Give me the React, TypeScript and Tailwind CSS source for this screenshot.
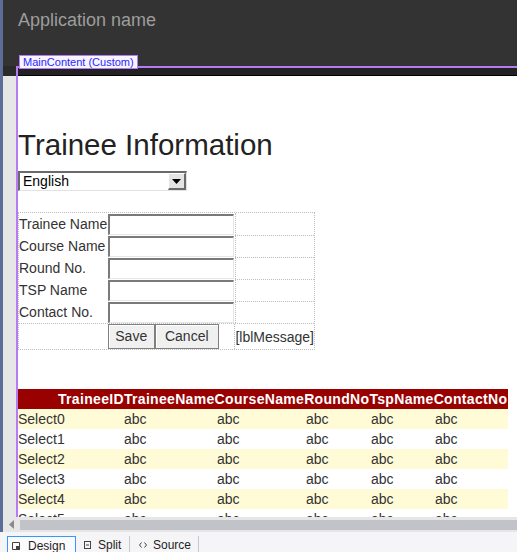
import React from "react";

const rows = [0, 1, 2, 3, 4, 5];
const fields = ["Trainee Name", "Course Name", "Round No.", "TSP Name", "Contact No."];

export default function App() {
  return (
    <div className="w-[517px] h-[552px] flex flex-col overflow-hidden bg-[#eeeef2] font-['Liberation_Sans',Arial,sans-serif]">
      <div className="flex h-[532px]">
        <div className="w-[3px] bg-[#5d6b99]" />
        <div className="flex-1 flex flex-col relative min-w-0">
          <div className="h-[66px] shrink-0 bg-[#333333] pl-[15px] pt-[10px] text-[18px] leading-[20px] text-[#9d9d9d]">
            Application name
          </div>
          <div className="absolute left-[16px] top-[55px] h-[14px] px-[3px] border border-[#b57bf5] bg-[#f7f3ff] text-[11px] leading-[12px] text-[#2a2aff] z-10">
            MainContent (Custom)
          </div>
          <div className="flex flex-1 min-h-0">
            <div className="w-[13px] flex flex-col">
              <div className="h-[10px] bg-[#2a2a2a]" />
              <div className="flex-1 bg-[#e6e6e6]" />
            </div>
            <div className="flex-1 flex flex-col border-l-2 border-t-2 border-[#b57bf5] min-w-0">
              <div className="h-[8px] shrink-0 bg-[#222222] border-b border-black" />
              <div className="flex-1 bg-white overflow-hidden pt-[52px] text-[#333333]">
                <div className="text-[29.5px] leading-[34px] text-[#222222]">Trainee Information</div>
                <div className="mt-[9px] w-[169px] h-[20px] flex border-t-2 border-l-2 border-[#6a6a6a] border-b border-r border-b-[#e2e2e2] border-r-[#e2e2e2]">
                  <div className="flex-1 pl-[3px] text-[14px] leading-[17px] text-black">English</div>
                  <div className="w-[18px] h-[17px] bg-[#e4e4e4] border-t border-l border-t-white border-l-white border-b-2 border-r-2 border-b-[#6a6a6a] border-r-[#6a6a6a] flex items-center justify-center">
                    <svg width="9" height="5" viewBox="0 0 9 5"><path d="M0 0h9L4.5 5z" fill="#000" /></svg>
                  </div>
                </div>
                <div className="mt-[21px] w-[297px] border border-dotted border-[#bdbdbd]">
                  {fields.map((f, i) => (
                    <div key={f} className="flex h-[22px]">
                      <div className="w-[89px] text-[14px] leading-[22px] whitespace-nowrap">{f}</div>
                      <div className="w-[127px] flex items-center">
                        <div className="w-[126px] h-[21px] bg-white border-t-2 border-l-2 border-[#7a7a7a] border-b border-r border-b-[#e6e6e6] border-r-[#e6e6e6]" />
                      </div>
                      <div className={"flex-1 border-l border-dotted border-[#bdbdbd] " + (i > 0 ? "border-t" : "")} />
                    </div>
                  ))}
                  <div className="flex h-[26px] border-t border-dotted border-[#bdbdbd]">
                    <div className="w-[89px]" />
                    <div className="w-[127px] flex items-start">
                      <button className="w-[47px] h-[25px] bg-[#f0f0f0] border border-[#7f7f7f] shadow-[inset_1px_1px_0_#ffffff] text-[14px] text-[#333333]">Save</button>
                      <button className="w-[64px] h-[25px] bg-[#f0f0f0] border border-[#7f7f7f] shadow-[inset_1px_1px_0_#ffffff] text-[14px] text-[#333333]">Cancel</button>
                    </div>
                    <div className="flex-1 border-l border-dotted border-[#bdbdbd] text-[14px] leading-[26px] whitespace-nowrap">[lblMessage]</div>
                  </div>
                </div>
                <div className="mt-[39px] w-[490px]">
                  <div className="h-[20px] flex bg-[#990000] pl-[40px] text-white font-bold text-[14px] tracking-[0.32px] leading-[20px] whitespace-nowrap">
                    <span>TraineeID</span>
                    <span>TraineeName</span>
                    <span>CourseName</span>
                    <span>RoundNo</span>
                    <span>TspName</span>
                    <span>ContactNo</span>
                  </div>
                  {rows.map((r) => (
                    <div key={r} className={"h-[20px] flex text-[14px] leading-[20px] text-[#333333] " + (r % 2 === 0 ? "bg-[#fffbd6]" : "bg-white")}>
                      <div className="w-[106px]">Select{r}</div>
                      <div className="w-[93px]">abc</div>
                      <div className="w-[89px]">abc</div>
                      <div className="w-[65px]">abc</div>
                      <div className="w-[64px]">abc</div>
                      <div className="flex-1">abc</div>
                    </div>
                  ))}
                </div>
              </div>
            </div>
          </div>
          <div className="h-[15px] shrink-0 bg-[#e6e6e6] flex items-center">
            <div className="w-[17px] flex justify-center">
              <svg width="5" height="9" viewBox="0 0 5 9"><path d="M5 0v9L0 4.5z" fill="#8a8a8a" /></svg>
            </div>
            <div className="flex-1 h-[10px] bg-[#c2c3c9]" />
          </div>
        </div>
      </div>
      <div className="h-[20px] flex items-end pl-[7px] text-[12px] text-[#1e1e1e] bg-[#f5f5f7]">
        <div className="w-[69px] h-[16px] border border-b-0 border-[#3399ff] bg-[#fbfbfd] flex items-start pt-[2px] pl-[4px] gap-[8px]">
          <svg width="8" height="8" viewBox="0 0 8 8" className="mt-[3px]"><path d="M0.5 0.5h7v4h-3v3h-4z" fill="none" stroke="#444" /><rect x="4" y="4" width="4" height="4" fill="#444" /></svg>
          <span className="leading-[14px]">Design</span>
        </div>
        <div className="w-[54px] h-[16px] flex items-start pt-[2px] pl-[8px] gap-[7px] border-r border-[#c8c8c8]">
          <svg width="7" height="8" viewBox="0 0 7 8" className="mt-[3px]"><rect x="0.5" y="0.5" width="6" height="7" fill="none" stroke="#444" /><path d="M2 4h3" stroke="#444" /></svg>
          <span className="leading-[14px]">Split</span>
        </div>
        <div className="w-[69px] h-[16px] flex items-start pt-[2px] pl-[9px] gap-[6px] border-r border-[#c8c8c8]">
          <svg width="8" height="6" viewBox="0 0 8 6" className="mt-[4px]"><path d="M2.5 0.5L0.5 3l2 2.5M5.5 0.5l2 2.5-2 2.5" fill="none" stroke="#444" /></svg>
          <span className="leading-[14px]">Source</span>
        </div>
      </div>
    </div>
  );
}
